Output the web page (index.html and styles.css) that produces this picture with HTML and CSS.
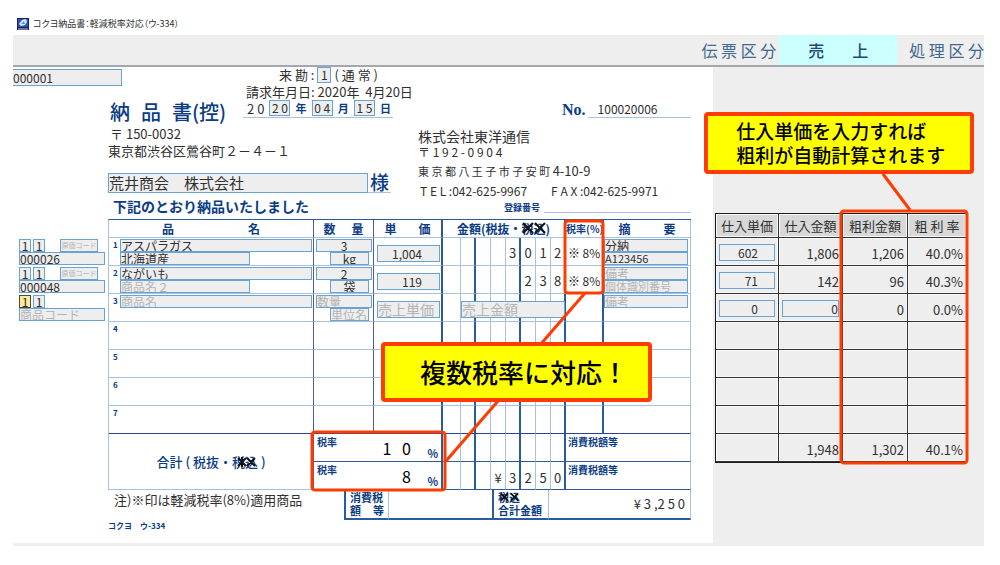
FILE: index.html
```html
<!DOCTYPE html>
<html lang="ja">
<head>
<meta charset="utf-8">
<meta name="viewport" content="width=device-width, initial-scale=1">
<title>コクヨ納品書：軽減税率対応（ウ-334）</title>
<link rel="stylesheet" href="styles.css">
</head>
<body>
<header class="titlebar">
  <svg class="app-icon" viewBox="0 0 12 12" aria-hidden="true"><rect width="12" height="12" fill="#16235c"/><rect x="1" y="1" width="10" height="8" fill="#2b52b8"/><path d="M2 6L5 2L9 1L10 4L8 7L4 8Z" fill="#dfe9ff"/><path d="M4 6L7 3L8 6Z" fill="#5d86dc"/><path d="M1 11h10" stroke="#c9c9c9"/></svg>
  <span>コクヨ納品書：軽減税率対応（ウ-334）</span>
</header>
<nav class="toolbar">
  <span class="tool">伝 票 区 分</span>
  <span class="tool active"><span>売</span><span>上</span></span>
  <span class="tool">処 理 区 分</span>
</nav>
<main class="workspace">
  <section class="sheet">
    <div class="head">
      <div class="head-title">
        <input class="field code-main" value="000001" aria-label="伝票コード">
        <h1><span>納</span><span>品</span><span>書(控)</span></h1>
      </div>
      <div class="dates">
        <div class="date-line mode"><span>来 勘 :</span><input class="field one" value="1" aria-label="来勘"><span>( 通 常 )</span></div>
        <div class="date-line">請求年月日: 2020年&nbsp; 4月20日</div>
        <div class="date-line slip-date"><span>2 0</span><input class="field two" value="2 0" aria-label="年"><b>年</b><input class="field two" value="0 4" aria-label="月"><b>月</b><input class="field two" value="1 5" aria-label="日"><b>日</b></div>
      </div>
      <div class="issuer">
        <div class="slip-no"><b>No.</b><span>100020006</span></div>
        <div class="company">株式会社東洋通信</div>
        <div class="zip">〒 1 9 2 - 0 9 0 4</div>
        <div class="issuer-address">東 京 都 八 王 子 市 子 安 町 <span>4-10-9</span></div>
        <div class="phones"><span>T E L :042-625-9967</span><span>F A X :042-625-9971</span></div>
        <div class="reg-no"><b>登録番号</b><span></span></div>
      </div>
      <div class="customer">
        <div class="cust-zip">〒 150-0032</div>
        <div class="cust-address">東京都渋谷区鶯谷町２－４－１</div>
        <div class="cust-name"><input class="field" value="荒井商会　株式会社" aria-label="得意先名"><b>様</b></div>
        <p>下記のとおり納品いたしました</p>
      </div>
    </div>

    <div class="details">
      <div class="codes">
        <div class="code-row"><input class="field" value="1" aria-label="区分1"><input class="field" value="1" aria-label="区分2"><input class="field place" placeholder="原価コード" aria-label="コード"><input class="field wide" value="000026" aria-label="商品コード"></div>
        <div class="code-row"><input class="field" value="1" aria-label="区分1"><input class="field" value="1" aria-label="区分2"><input class="field place" placeholder="原価コード" aria-label="コード"><input class="field wide" value="000048" aria-label="商品コード"></div>
        <div class="code-row"><input class="field current" value="1" aria-label="区分1"><input class="field" value="1" aria-label="区分2"><input class="field wide" placeholder="商品コード" aria-label="商品コード"></div>
      </div>
      <div class="slip">
        <table class="lines">
          <colgroup><col class="c-name"><col class="c-qty"><col class="c-price"><col class="c-lead"><col class="c-digit" span="7"><col class="c-tax"><col class="c-note"></colgroup>
          <thead><tr>
            <th class="v"><div class="spread gap-xl"><span>品</span><span>名</span></div></th>
            <th class="v"><div class="spread gap-s"><span>数</span><span>量</span></div></th>
            <th class="k"><div class="spread gap-m"><span>単</span><span>価</span></div></th>
            <th class="k" colspan="8">金額(税抜・<span class="void">税込<svg viewBox="0 0 24 12" aria-hidden="true"><path d="M1 1L11 11M11 1L1 11M13 1L23 11M23 1L13 11"/></svg></span>)</th>
            <th class="k tax-head">税率(%)</th>
            <th><div class="spread gap-l"><span>摘</span><span>要</span></div></th>
          </tr></thead>
          <tbody>
            <tr>
              <td class="v"><div class="item"><b>1</b><div class="stack"><input class="field" value="アスパラガス" aria-label="商品名"><input class="field second" value="北海道産" aria-label="商品名2"></div></div></td>
              <td class="v"><div class="stack qty"><input class="field" value="3" aria-label="数量"><input class="field unit" value="kg" aria-label="単位名"></div></td>
              <td class="k"><input class="field price" value="1,004" aria-label="売上単価"></td>
              <td class="d"></td><td class="d k"></td><td class="d"></td><td class="d"></td><td class="d k">3</td><td class="d">0</td><td class="d">1</td><td class="d k">2</td>
              <td class="k tax"><b>※</b> 8%</td>
              <td><div class="stack note"><input class="field" value="分納" aria-label="備考"><input class="field id" value="A123456" aria-label="個体識別番号"></div></td>
            </tr>
            <tr>
              <td class="v"><div class="item"><b>2</b><div class="stack"><input class="field" value="ながいも" aria-label="商品名"><input class="field second" placeholder="商品名２" aria-label="商品名2"></div></div></td>
              <td class="v"><div class="stack qty"><input class="field" value="2" aria-label="数量"><input class="field unit" value="袋" aria-label="単位名"></div></td>
              <td class="k"><input class="field price" value="119" aria-label="売上単価"></td>
              <td class="d"></td><td class="d k"></td><td class="d"></td><td class="d"></td><td class="d k"></td><td class="d">2</td><td class="d">3</td><td class="d k">8</td>
              <td class="k tax"><b>※</b> 8%</td>
              <td><div class="stack note"><input class="field" placeholder="備考" aria-label="備考"><input class="field id" placeholder="個体識別番号" aria-label="個体識別番号"></div></td>
            </tr>
            <tr>
              <td class="v"><div class="item"><b>3</b><div class="stack"><input class="field" placeholder="商品名" aria-label="商品名"></div></div></td>
              <td class="v"><div class="stack qty new"><input class="field" placeholder="数量" aria-label="数量"><input class="field unit" placeholder="単位名" aria-label="単位名"></div></td>
              <td class="k"><input class="field price new" placeholder="売上単価" aria-label="売上単価"></td>
              <td class="d"></td><td class="d k amount-start"><input class="field amount" placeholder="売上金額" aria-label="売上金額"></td><td class="d"></td><td class="d"></td><td class="d k"></td><td class="d"></td><td class="d"></td><td class="d k"></td>
              <td class="k"></td>
              <td><div class="stack note"><input class="field" placeholder="備考" aria-label="備考"></div></td>
            </tr>
            <tr><td class="v"><div class="item"><b>4</b></div></td><td class="v"></td><td class="k"></td><td class="d"></td><td class="d k"></td><td class="d"></td><td class="d"></td><td class="d k"></td><td class="d"></td><td class="d"></td><td class="d k"></td><td class="k"></td><td></td></tr>
            <tr><td class="v"><div class="item"><b>5</b></div></td><td class="v"></td><td class="k"></td><td class="d"></td><td class="d k"></td><td class="d"></td><td class="d"></td><td class="d k"></td><td class="d"></td><td class="d"></td><td class="d k"></td><td class="k"></td><td></td></tr>
            <tr><td class="v"><div class="item"><b>6</b></div></td><td class="v"></td><td class="k"></td><td class="d"></td><td class="d k"></td><td class="d"></td><td class="d"></td><td class="d k"></td><td class="d"></td><td class="d"></td><td class="d k"></td><td class="k"></td><td></td></tr>
            <tr class="last"><td class="v"><div class="item"><b>7</b></div></td><td class="v"></td><td class="k"></td><td class="d"></td><td class="d k"></td><td class="d"></td><td class="d"></td><td class="d k"></td><td class="d"></td><td class="d"></td><td class="d k"></td><td class="k"></td><td></td></tr>
          </tbody>
          <tfoot>
            <tr>
              <th class="v sum" rowspan="2">合計 ( 税抜・<span class="void">税込<svg viewBox="0 0 24 12" aria-hidden="true"><path d="M5 2L13 10M13 2L5 10M9 1V11M14 2L22 10M22 2L14 10"/></svg></span> )</th>
              <td class="k" colspan="2"><div class="rate"><b>税率</b><span>1&nbsp;&nbsp; 0</span><i>%</i></div></td>
              <td class="d"></td><td class="d k"></td><td class="d"></td><td class="d"></td><td class="d k"></td><td class="d"></td><td class="d"></td><td class="d k"></td>
              <td class="tax-sum" colspan="2">消費税額等</td>
            </tr>
            <tr>
              <td class="k" colspan="2"><div class="rate"><b>税率</b><span>8</span><i>%</i></div></td>
              <td class="d"></td><td class="d k"></td><td class="d"></td><td class="d low">¥</td><td class="d k low">3</td><td class="d low">2</td><td class="d low">5</td><td class="d k low">0</td>
              <td class="tax-sum" colspan="2">消費税額等</td>
            </tr>
          </tfoot>
        </table>
        <div class="grand">
          <div class="remark">注)※印は軽減税率(8%)適用商品</div>
          <div class="box-label edge"><span>消費税</span><span class="apart"><span>額</span><span>等</span></span></div>
          <div class="box"></div>
          <div class="box-label"><span class="void">税込<svg viewBox="0 0 24 12" aria-hidden="true"><path d="M3 2L11 10M11 2L3 10M14 2L22 10M22 2L14 10"/></svg></span><span>合計金額</span></div>
          <div class="box total">¥ 3 ,2 5 0</div>
        </div>
        <div class="brand">コクヨ　ウ-334</div>
      </div>
    </div>
  </section>

  <aside class="margin-panel">
    <table class="margin">
      <colgroup><col class="m-a"><col class="m-b"><col class="m-c"><col class="m-d"></colgroup>
      <thead><tr><th>仕入単価</th><th>仕入金額</th><th>粗利金額</th><th>粗 利 率</th></tr></thead>
      <tbody>
        <tr><td><input class="field cost" value="602" aria-label="仕入単価"></td><td>1,806</td><td>1,206</td><td>40.0%</td></tr>
        <tr><td><input class="field cost" value="71" aria-label="仕入単価"></td><td>142</td><td>96</td><td>40.3%</td></tr>
        <tr><td><input class="field cost" value="0" aria-label="仕入単価"></td><td class="entry"><input class="field cost-sum" value="0" aria-label="仕入金額"></td><td>0</td><td>0.0%</td></tr>
        <tr><td></td><td></td><td></td><td></td></tr>
        <tr><td></td><td></td><td></td><td></td></tr>
        <tr><td></td><td></td><td></td><td></td></tr>
        <tr><td></td><td></td><td></td><td></td></tr>
        <tr><td></td><td>1,948</td><td>1,302</td><td>40.1%</td></tr>
      </tbody>
    </table>
  </aside>

  <svg class="marks" viewBox="0 0 971 479" preserveAspectRatio="none" aria-hidden="true">
    <rect x="552" y="154" width="38" height="72" rx="3"/>
    <rect x="299" y="365" width="133" height="58" rx="3"/>
    <rect x="828" y="144" width="126" height="252" rx="3"/>
    <path d="M572 226L527 278M485 334L433 394M870 107L897 143"/>
  </svg>
  <div class="callout callout-rate">複数税率に対応！</div>
  <div class="callout callout-margin">仕入単価を入力すれば<br>粗利が自動計算されます</div>
</main>
</body>
</html>
```

FILE: styles.css
```css
:root {
  --ink: #303030;
  --navy: #0b3c85;
  --line: #a9c1dd;
  --dark-line: #2a5c9c;
  --violet-line: #5058a4;
  --field-line: #69a3d3;
  --panel: #eeeeee;
  --mark: #ff3c00;
}

* { box-sizing: border-box; }

body {
  margin: 0;
  padding: 0 16px 0 13px;
  background: #fff;
  color: var(--ink);
  font-family: "Noto Sans CJK JP", sans-serif;
  font-size: 12px;
  line-height: 16px;
}

h1, p { margin: 0; }

.titlebar {
  display: flex;
  align-items: center;
  gap: 4px;
  height: 35px;
  padding: 12px 0 0 4px;
  font-size: 9px;
  line-height: 12px;
  font-feature-settings: "palt";
}
.app-icon { width: 12px; height: 12px; }

.toolbar {
  display: flex;
  justify-content: flex-end;
  height: 32px;
  background: var(--panel);
  border-bottom: 2px solid #a3a8ae;
  color: #41698f;
  font-size: 16px;
  line-height: 30px;
}
.tool { padding-left: 12px; }
.tool:first-child { padding-right: 3px; }
.tool.active {
  display: flex;
  justify-content: center;
  gap: 28px;
  width: 118px;
  padding: 0;
  background: #ccffff;
  color: #1f4a78;
  font-weight: 500;
}

.workspace {
  position: relative;
  display: grid;
  grid-template-columns: minmax(0, 700fr) minmax(0, 271fr);
}
.sheet {
  padding: 0 22px 11px 0;
  border-bottom: 3px solid var(--panel);
}
.margin-panel {
  padding: 146px 17px 0 2px;
  background: var(--panel);
}

.field {
  display: block;
  width: 100%;
  min-width: 0;
  height: 13px;
  margin: 0;
  padding: 0 0 1px;
  border: 1px solid var(--field-line);
  border-radius: 0;
  background: var(--panel);
  color: var(--ink);
  font: inherit;
  font-size: 12px;
  line-height: 10px;
}
.field::placeholder { color: #b4b4b4; opacity: 1; }

/* Slip heading */
.head {
  display: grid;
  grid-template-columns: 230fr 175fr 273fr;
  grid-template-rows: 59px auto;
  height: 152px;
}
.head-title { padding-top: 2px; }
.code-main { width: 109px; height: 17px; border-left: 0; line-height: 14px; }
h1 {
  display: flex;
  gap: 11px;
  padding: 12px 0 0 97px;
  color: var(--navy);
  font-size: 20px;
  font-weight: 500;
  line-height: 28px;
  white-space: nowrap;
}
.dates { justify-self: start; font-size: 13px; white-space: nowrap; }
.date-line { padding-left: 3px; line-height: 17px; }
.mode { display: flex; gap: 3px; padding-left: 36px; line-height: 16px; }
.mode .field { height: 16px; line-height: 13px; }
.one { width: 14px; text-align: center; }
.slip-date {
  display: flex;
  justify-content: space-between;
  width: 150px;
  padding: 0 2px 0 4px;
  border-bottom: 1px solid var(--line);
}
.slip-date b { color: var(--navy); font-size: 11px; }
.two { width: 21px; height: 16px; line-height: 13px; text-align: center; }

.issuer { grid-row: 1 / 3; grid-column: 3; padding-top: 34px; white-space: nowrap; }
.slip-no {
  display: flex;
  align-items: flex-end;
  gap: 2px;
  height: 17px;
  margin-left: 144px;
}
.slip-no b {
  color: var(--navy);
  font-family: "Liberation Serif", serif;
  font-size: 16px;
}
.slip-no span {
  flex: 1;
  padding-left: 10px;
  border-bottom: 1px solid var(--line);
}
.company { margin-top: 9px; font-size: 14px; line-height: 18px; }
.zip { line-height: 14px; }
.issuer-address { margin-top: 4px; font-size: 11px; }
.issuer-address span { font-size: 13px; }
.phones { display: flex; gap: 24px; margin-top: 4px; padding-left: 2px; }
.reg-no { display: flex; gap: 4px; height: 13px; margin-top: 1px; padding-left: 86px; }
.reg-no b { color: var(--navy); font-size: 9px; }
.reg-no span { flex: 1; border-bottom: 1px solid var(--line); }

.customer { grid-row: 2; grid-column: 1 / 3; padding-left: 95px; white-space: nowrap; }
.cust-zip { padding-left: 2px; font-size: 13px; }
.cust-address { font-size: 13px; line-height: 17px; }
.cust-name { display: flex; height: 20px; margin-top: 14px; }
.cust-name .field { width: 260px; height: 20px; font-size: 15px; line-height: 17px; }
.cust-name b {
  padding: 0 2px;
  border-bottom: 1px solid var(--line);
  color: var(--navy);
  font-size: 19px;
  font-weight: 500;
  line-height: 18px;
}
.customer p {
  margin-top: 3px;
  padding-left: 5px;
  color: var(--navy);
  font-size: 14px;
  font-weight: 700;
  line-height: 20px;
}

/* Slip lines */
.details { display: grid; grid-template-columns: minmax(0, 95fr) minmax(0, 583fr); }
.codes { padding: 19px 3px 0 6px; }
.code-row {
  display: grid;
  grid-template-columns: 12px 12px 1fr;
  grid-auto-rows: 13px;
  column-gap: 2px;
  height: 28px;
  padding-top: 1px;
}
.code-row .field { text-align: center; }
.code-row .place {
  width: auto;
  margin: 0 7px 0 13px;
  font-size: 7px;
}
.code-row .wide { grid-column: 1 / 4; grid-row: 2; text-align: left; }
.code-row .current { background: #fbeb9a; border-color: #4a4a3a; }

.lines {
  width: 100%;
  border-spacing: 0;
  border-top: 1px solid var(--dark-line);
  border-left: 1px solid var(--line);
  table-layout: fixed;
}
.c-name { width: 205px; }
.c-qty { width: 60px; }
.c-price { width: 69px; }
.c-lead { width: 18px; }
.c-digit { width: 15px; }
.c-tax { width: 38px; }
.c-note { width: 87px; }
.lines th, .lines td {
  height: 28px;
  padding: 0;
  border-right: 1px solid var(--line);
  border-bottom: 1px solid var(--line);
  vertical-align: top;
}
.lines th { color: var(--navy); font-weight: 700; white-space: nowrap; }
.lines thead th { height: 18px; line-height: 17px; }
.lines .v { border-right-color: var(--violet-line); }
.lines .k { border-right: 2px solid var(--dark-line); }
.lines .last td { border-bottom-color: #2d3f96; }
.lines .d { padding-top: 3px; font-size: 13px; line-height: 24px; text-align: center; }
.lines .low { padding-top: 5px; line-height: 22px; }
.lines tfoot td { border-bottom-color: var(--dark-line); }
.lines .tax-head { font-size: 10px; }

.spread { display: flex; justify-content: center; }
.gap-s { gap: 16px; }
.gap-m { gap: 22px; }
.gap-l { gap: 33px; }
.gap-xl { gap: 74px; }

.void { position: relative; display: inline-block; }
.void svg {
  position: absolute;
  inset: 2px 0;
  width: 100%;
  height: 12px;
  fill: none;
  stroke: #111;
  stroke-width: 2;
}

.item { display: flex; padding-left: 4px; }
.item b { width: 7px; color: var(--navy); font-size: 8px; line-height: 14px; }
.stack { flex: 1; padding: 1px 1px 0 0; }
.second { width: 130px; }
.qty { padding: 1px 1px 0 2px; }
.qty .field { text-align: center; }
.qty.new .field { text-align: left; }
.qty .unit { width: 39px; margin-left: 14px; }
.price {
  width: calc(100% - 4px);
  height: 17px;
  margin: 7px 1px 0 3px;
  padding-right: 17px;
  line-height: 14px;
  text-align: right;
}
.price.new { padding-right: 0; font-size: 14px; text-align: left; }
.amount-start { position: relative; }
.amount {
  position: absolute;
  top: 7px;
  left: 0;
  width: 800%;
  height: 17px;
  font-size: 14px;
  line-height: 14px;
}
.lines .tax { padding-top: 3px; line-height: 24px; text-align: center; white-space: nowrap; }
.tax b { color: #000; }
.note { padding-right: 2px; }
.note .id { font-size: 11px; }

.lines .sum { vertical-align: middle; font-size: 13px; font-weight: 500; }
.rate {
  display: grid;
  grid-template-columns: 1fr auto 27px;
  padding: 0 3px;
  color: #000;
}
.rate b, .lines .tax-sum { color: var(--navy); font-size: 10px; font-weight: 700; }
.rate span { padding-top: 4px; font-size: 16px; line-height: 20px; }
.rate i {
  padding-top: 12px;
  color: var(--navy);
  font-size: 11px;
  font-style: normal;
  font-weight: 700;
  line-height: 14px;
  text-align: right;
}
.lines .tax-sum { padding-left: 2px; }

.grand { display: grid; grid-template-columns: 236fr 45fr 105fr 55fr 142fr; height: 30px; }
.remark { padding-left: 6px; font-size: 13px; line-height: 20px; white-space: nowrap; }
.box, .box-label {
  border-right: 1px solid var(--line);
  border-bottom: 2px solid var(--dark-line);
}
.box { border-right: 2px solid var(--dark-line); }
.box-label {
  display: flex;
  flex-direction: column;
  align-items: flex-start;
  padding: 1px 4px 0;
  color: var(--navy);
  font-size: 11px;
  font-weight: 700;
  line-height: 13px;
  white-space: nowrap;
}
.box-label .void svg { inset: 0; }
.edge { border-left: 2px solid var(--dark-line); }
.apart { display: flex; justify-content: space-between; align-self: stretch; }
.total { padding-right: 5px; border-right: 1px solid var(--line); font-size: 13px; line-height: 28px; text-align: right; }
.brand { color: var(--navy); font-size: 8px; font-weight: 700; line-height: 12px; }

/* Gross margin table */
.margin {
  width: 100%;
  border-spacing: 0;
  border: 1px solid #1c1c1c;
  border-width: 1px 0 1px 1px;
  table-layout: fixed;
}
.m-a { width: 63px; }
.m-b { width: 64px; }
.m-c { width: 65px; }
.m-d { width: 59px; }
.margin th, .margin td {
  height: 28px;
  padding: 4px 3px 0 0;
  border-right: 1px solid #333;
  border-bottom: 1px solid #333;
  box-shadow: inset 0 0 0 1px #f9f9f9;
  font-size: 13px;
  line-height: 22px;
  text-align: right;
}
.margin th {
  height: 24px;
  padding: 0;
  background: #d8d8d8;
  font-weight: 400;
  text-align: center;
  white-space: nowrap;
}
.margin td:first-child, .margin .entry { padding: 2px 3px 0; }
.margin .field { height: 17px; line-height: 14px; text-align: right; }
.margin .cost { padding-right: 16px; }

/* Annotations */
.marks {
  position: absolute;
  inset: 0;
  width: 100%;
  height: 100%;
  fill: none;
  stroke: var(--mark);
  stroke-width: 3;
  pointer-events: none;
}
.marks * { vector-effect: non-scaling-stroke; }
.callout {
  position: absolute;
  border: 4px solid var(--mark);
  border-radius: 4px;
  background: #ffff00;
  color: #000;
  font-weight: 500;
  white-space: nowrap;
}
.callout-rate {
  top: 275px;
  left: 37.9%;
  padding: 0 20px 0 35px;
  font-size: 26px;
  line-height: 52px;
}
.callout-margin {
  top: 45px;
  left: 71.2%;
  padding: 3px 25px 3px 28px;
  font-size: 19px;
  line-height: 24px;
}
```
